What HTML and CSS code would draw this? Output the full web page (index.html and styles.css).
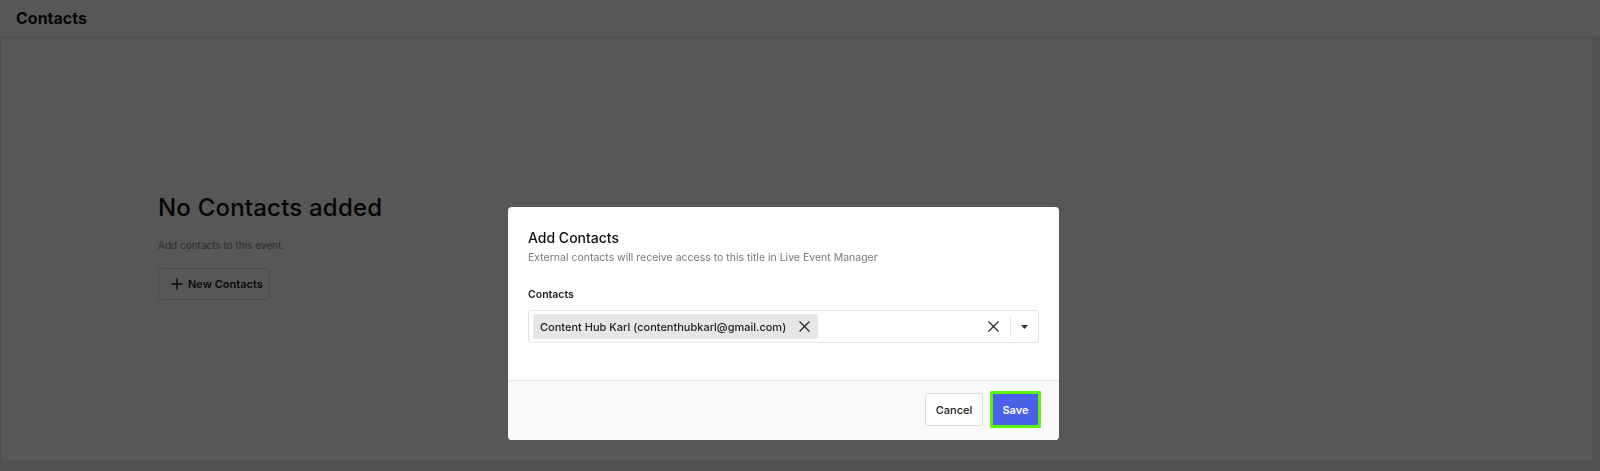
FILE: index.html
```html
<!DOCTYPE html>
<html>
<head>
<meta charset="utf-8">
<link rel="stylesheet" href="styles.css">
</head>
<body>
<div class="page">
  <header class="topbar"><h1 class="page-title">Contacts</h1></header>
  <section class="card">
    <div class="empty">
      <h2 class="empty-title">No Contacts added</h2>
      <p class="empty-text">Add contacts to this event.</p>
      <button class="btn-outline"><svg width="12" height="12" viewBox="0 0 12 12"><path d="M6 0.5V11.5M0.5 6H11.5" stroke="#222" stroke-width="1.4"/></svg>New Contacts</button>
    </div>
  </section>
</div>
<div class="overlay">
  <div class="modal">
    <div class="modal-body">
      <h3 class="modal-title">Add Contacts</h3>
      <p class="modal-sub">External contacts will receive access to this title in Live Event Manager</p>
      <label class="field-label">Contacts</label>
      <div class="select">
        <div class="select-values">
          <span class="chip">Content Hub Karl (contenthubkarl@gmail.com)<svg class="chip-x" width="11" height="11" viewBox="0 0 11 11"><path d="M0.5 0.5L10.5 10.5M10.5 0.5L0.5 10.5" stroke="#222" stroke-width="1.2"/></svg></span>
        </div>
        <svg class="clear-x" width="11" height="11" viewBox="0 0 11 11"><path d="M0.5 0.5L10.5 10.5M10.5 0.5L0.5 10.5" stroke="#222" stroke-width="1.2"/></svg>
        <span class="sep"></span>
        <span class="caret"><svg width="7" height="4" viewBox="0 0 7 4"><path d="M0 0H7L3.5 4Z" fill="#333"/></svg></span>
      </div>
    </div>
    <div class="modal-footer">
      <button class="btn-cancel">Cancel</button>
      <button class="btn-save">Save</button>
    </div>
  </div>
</div>
</body>
</html>
```
FILE: styles.css
```css
* { box-sizing: border-box; }
html, body { margin: 0; padding: 0; }
body {
  width: 1600px;
  height: 471px;
  overflow: hidden;
  background: #ececec;
  font-family: Inter, "Noto Sans", "Liberation Sans", sans-serif;
  color: #111;
}
.page { width: 1600px; height: 471px; display: flex; flex-direction: column; }
.topbar {
  height: 38px;
  background: #fff;
  border-bottom: 1px solid #e4e4e4;
  padding: 0 16px;
  display: flex;
  align-items: center;
}
.page-title { margin: 0; font-size: 16px; font-weight: 700; letter-spacing: 0; position: relative; top: -1px; }
.card {
  width: 1594px;
  height: 424px;
  background: #fff;
  border: 1px solid #e2e2e2;
  border-top: none;
}
.empty { padding: 155px 0 0 157px; }
.empty-title { margin: 0; font-size: 24px; font-weight: 500; line-height: 30px; letter-spacing: 0.2px; }
.empty-text { margin: 15px 0 0; font-size: 10px; color: #888; line-height: 14px; }
.btn-outline {
  margin-top: 16px;
  height: 32px;
  width: 112px;
  border: 1px solid #ddd;
  border-radius: 3px;
  background: #fff;
  font-family: inherit;
  font-size: 11px;
  font-weight: 600;
  color: #222;
  display: flex;
  align-items: center;
  gap: 5px;
  padding: 0 0 0 12px;
}
.overlay {
  position: fixed;
  inset: 0;
  background: rgba(0, 0, 0, 0.66);
  padding: 207px 0 0 508px;
}
.modal {
  width: 551px;
  height: 233px;
  background: #fff;
  border-radius: 4px;
  overflow: hidden;
  display: flex;
  flex-direction: column;
}
.modal-body { padding: 22px 20px 0; flex: 1; }
.modal-title { margin: 0; font-size: 14px; font-weight: 500; line-height: 18px; color: #111; }
.modal-sub { margin: 4px 0 0; font-size: 10.5px; color: #777; line-height: 14px; }
.field-label { display: block; margin-top: 23px; font-size: 10.5px; font-weight: 600; color: #222; line-height: 14px; }
.select {
  margin-top: 8px;
  height: 33px;
  border: 1px solid #e2e2e2;
  border-radius: 3px;
  display: flex;
  align-items: center;
}
.select-values { flex: 1; padding-left: 4px; display: flex; align-items: center; }
.chip {
  height: 25px;
  background: #e6e6e6;
  border-radius: 3px;
  font-size: 11px;
  font-weight: 500;
  color: #222;
  display: inline-flex;
  align-items: center;
  padding: 0 8px 0 7px;
  gap: 10px;
  width: 285px;
}
.chip-x { margin-left: auto; }
.clear-x { margin-right: 11px; }
.sep { width: 1px; height: 20px; background: #e2e2e2; }
.caret { width: 27px; display: flex; justify-content: center; }
.modal-footer {
  height: 60px;
  background: #fafafa;
  border-top: 1px solid #e6e6e6;
  display: flex;
  align-items: center;
  justify-content: flex-end;
  gap: 7px;
  padding: 0 18px 2px 0;
}
.btn-cancel {
  height: 33px;
  width: 58px;
  border: 1px solid #ddd;
  border-radius: 3px;
  background: #fff;
  font-family: inherit;
  font-size: 11px;
  font-weight: 500;
  color: #222;
  padding: 0;
}
.btn-save {
  height: 37px;
  width: 51px;
  border: 3px solid #5cf30c;
  border-radius: 1px;
  background: #4a60e8;
  font-family: inherit;
  font-size: 11px;
  font-weight: 600;
  color: #fff;
  padding: 0;
}
```
